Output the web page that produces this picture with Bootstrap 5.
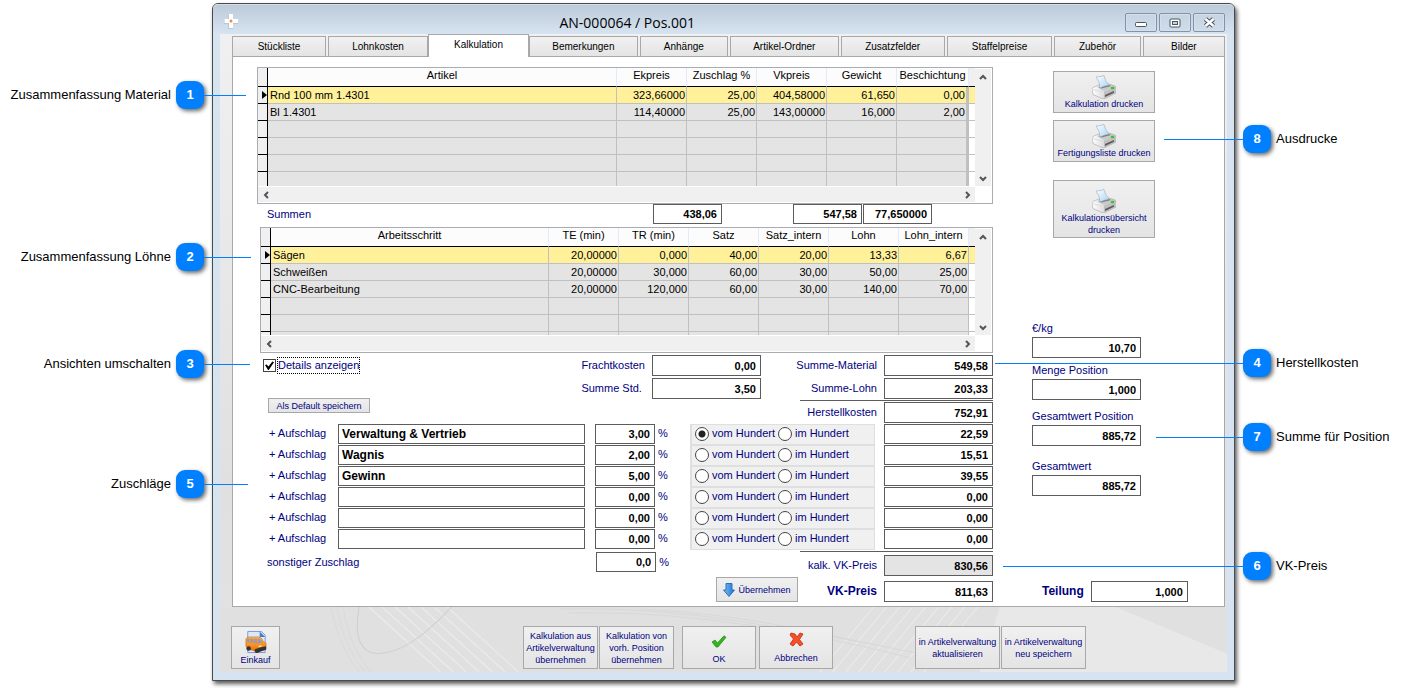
<!DOCTYPE html>
<html lang="de">
<head>
<meta charset="utf-8">
<meta name="viewport" content="width=device-width, initial-scale=1">
<title>AN-000064 / Pos.001</title>
<link href="https://cdn.jsdelivr.net/npm/bootstrap@5.3.0/dist/css/bootstrap.min.css" rel="stylesheet">
<style>
  :root { --navy: #000080; --edge: #a8a8a8; --field: #5c5c5c; --pin: #0080ff; }
  body { font-family: "Liberation Sans", Arial, sans-serif; font-size: 11px; line-height: 13px; color: #000; background: #fff; min-height: 100vh; }
  label, .lbl { color: var(--navy); white-space: nowrap; }

  /* numbered annotations beside the window */
  .side { flex: none; position: relative; z-index: 2; }
  .side-start { width: 212px; padding-right: 8px; }
  .side-end { width: 171px; padding-left: 8px; }
  .callout { display: flex; align-items: center; gap: 5px; font-size: 13px; line-height: 28px; white-space: nowrap; position: relative; }
  .side-start .callout { justify-content: flex-end; }
  .pin { width: 28px; height: 28px; border-radius: 9px; background: var(--pin); color: #fff; text-align: center; box-shadow: 2px 2px 4px rgba(0,0,0,.6); flex: none; }
  .leader { position: absolute; top: 14px; height: 1px; background: var(--pin); }
  .side-start .leader { left: 100%; }
  .side-end .leader { right: 100%; }

  /* window frame */
  .win { flex: 1 1 0; min-width: 1000px; margin-top: 3px; border: 1px solid #4a4a4a; border-radius: 6px 6px 0 0; background: #d6e4f2; padding: 0 7px 8px; box-shadow: 2px 3px 4px rgba(0,0,0,.65); }
  .titlebar { height: 30px; margin: 0 -7px; padding: 0 9px 0 10px; border-radius: 5px 5px 0 0; background: linear-gradient(#bccad9, #d6e4f2); font-family: "Open Sans", sans-serif; font-size: 14px; line-height: 36px; border-top: 1px solid #d5dee8; }
  .capbtn { width: 32px; height: 19px; padding: 0; border: 1px solid #8292a9; border-radius: 2px; background: linear-gradient(#c6d3e1, #cfdcea); display: flex; align-items: center; justify-content: center; box-shadow: inset 0 0 0 1px #d5e0ec; }
  .client { background: linear-gradient(#f0f0f0, #e0e0e0 70%, #e2e2e2); padding: 0 2px 0 12px; }

  /* tabs */
  .tabs { gap: 2px; height: 22px; align-items: flex-end; }
  .tabs button { border: 1px solid var(--edge); border-bottom: 0; background: linear-gradient(#f1f1f1, #e4e4e4); font-size: 10px; line-height: 12px; height: 20px; padding: 0; color: #000; min-width: 0; }
  .tabs button.active { background: #fff; height: 23px; margin: 0 -2px -1px; padding-bottom: 2px; position: relative; z-index: 1; }
  .sheet { background: #fff; border: 1px solid var(--edge); padding: 10px 0 4px 24px; }
  .maincol { flex: 1 1 0; min-width: 0; }
  .sidecol { flex: none; width: 231px; padding-left: 39px; }

  /* data grids */
  .gridbox { border: 1px solid #a9acb2; background: #fff; display: grid; grid-template-columns: 1fr 17px; grid-template-rows: auto 17px; }
  .clip-a { height: 118px; overflow: hidden; }
  .clip-b { height: 107px; overflow: hidden; }
  .gridbox table { width: 100%; table-layout: fixed; border-collapse: separate; border-spacing: 0; line-height: 16px; }
  .gridbox th { font-weight: 400; text-align: center; height: 19px; line-height: 14px; padding: 0 0 4px; border-bottom: 1px solid #000; border-right: 1px solid #e3ebf8; background: #fcfcfc; white-space: nowrap; }
  .gridbox td { height: 17px; padding: 0 1px 0 0; text-align: right; background: #e4e4e4; border-bottom: 1px solid silver; border-right: 1px solid silver; white-space: nowrap; }
  .gridbox th:first-child { background: #f0f0f0; border-right: 1px solid #000; }
  .gridbox td:first-child { background: #f0f0f0; border-right: 1px solid #000; border-bottom-color: #000; padding: 0; }
  .gridbox td:nth-child(2) { text-align: left; padding-left: 2px; }
  .gridbox th:last-child { background: #f0f0f0; border-right: 0; }
  .gridbox td:last-child { background: #fff; border-right: 0; padding: 0; }
  .gridbox .sel td:not(:first-child) { background: #fff09a; }
  .thick td:nth-last-child(2) { border-right-width: 3px; }
  .gridbox .sel td:first-child { text-align: right; }
  .sel svg { display: block; margin-left: auto; }
  .vbar, .hbar { background: #f0f0f0; display: flex; justify-content: space-between; align-items: center; }
  .vbar { flex-direction: column; padding: 5px 0 4px; margin: 1px 1px 0 0; }
  .hbar { padding: 0 4px 0 5px; margin: 1px 0; }
  .vbar svg, .hbar svg { fill: none; stroke: #555; stroke-width: 2; display: block; }

  /* fields */
  .fld { border: 1px solid var(--field); background: #fff; font-weight: 700; text-align: right; height: 21px; padding: 0 4px; width: 109px; color: #000; flex: none; border-radius: 0; }
  .fld-s { height: 20px; }
  .fld.sum { width: 69px; }
  .fld.pct { width: 60px; }
  .fld.text { text-align: left; font-size: 12px; flex: 1 1 0; min-width: 0; padding: 0 3px; }
  .fld.calc { background: #e4e4e4; }
  .total { width: 193px; }
  .total .line { height: 1px; background: var(--field); margin: 1px 0; }
  .pair { display: flex; align-items: center; justify-content: flex-end; gap: 7px; }
  .pair .fw-bold, .sidecol .fw-bold { font-size: 12px; }
  .surcharge { height: 21px; align-items: flex-start; }
  .surcharge > label, .surcharge > .lbl { line-height: 18px; }
  .surcharge > label:first-child { width: 81px; padding-left: 12px; }
  .percent { width: 35px; padding-left: 3px; }
  .mode { width: 185px; height: 21px; background: #f0f0f0; border: solid #dfdfdf; border-width: 1px 1px 1px 2px; display: flex; align-items: center; gap: 3px; padding: 0 0 2px 3px; margin-right: 9px; }
  .mode input { appearance: none; width: 14px; height: 14px; margin: 0; border: 1px solid #444; border-radius: 50%; background: #fff; }
  .mode input:checked { background: radial-gradient(circle, #222 0 3px, #fff 4px); }
  .tick { appearance: none; width: 13px; height: 13px; margin: 0; border: 1px solid #444; background: #fff; display: inline-grid; flex: none; }
  .tick:checked::before { content: ""; width: 9px; height: 9px; margin: 1px; background: #000; clip-path: polygon(0 45%, 18% 38%, 38% 60%, 82% 5%, 100% 14%, 42% 100%, 34% 100%); }
  .focus { border: 1px dotted #000; line-height: 15px; }

  /* push buttons */
  .push { border: 1px solid var(--edge); background: linear-gradient(#f0f0f0, #e4e4e4); color: var(--navy); font-size: 9px; line-height: 12px; padding: 0; white-space: nowrap; border-radius: 0; }
  .push svg { display: block; margin: 0 auto; }
  .print { width: 102px; height: 42px; }
  .print svg { margin-bottom: -1px; }
  .print.tall { height: 58px; padding-top: 7px; }
  .footer { height: 65px; padding: 19px 0 0 12px; margin: 0 -2px 0 -13px; position: relative; overflow: hidden; display: flex; align-items: flex-start; }
  .footer .art { position: absolute; inset: 0; width: 100%; height: 100%; }
  .footer .push { height: 43px; position: relative; flex: none; }
</style>
</head>
<body class="d-flex align-items-start">

<svg width="0" height="0" class="position-absolute" aria-hidden="true">
  <defs>
    <linearGradient id="paper" x1="0" y1="0" x2="1" y2="1"><stop offset="0" stop-color="#fff"/><stop offset="1" stop-color="#a8d4f8"/></linearGradient>
    <linearGradient id="shell" x1="0" y1="0" x2="1" y2="0"><stop offset="0" stop-color="#fff"/><stop offset="1" stop-color="#bbb"/></linearGradient>
    <linearGradient id="blue" x1="0" y1="0" x2="1" y2="0"><stop offset="0" stop-color="#7cc0f6"/><stop offset="1" stop-color="#1d6fd0"/></linearGradient>
    <linearGradient id="van" x1="0" y1="0" x2="0" y2="1"><stop offset="0" stop-color="#ffc04a"/><stop offset="1" stop-color="#ee6a0a"/></linearGradient>
    <symbol id="printer" viewBox="0 0 24 24">
      <path d="M0 14 Q0 13 2 12 L7 10 L17 9 L23 11 Q24 12 24 13 V18 L13 23.500 Q12 24 10 23.500 L1 19.500Z" fill="url(#shell)" stroke="#a5a5a5" stroke-width=".6"/>
      <path d="M5 12 L16 9 L23 11.500 L12 16Z" fill="#c9c9c9"/>
      <path d="M7 12 L17 10 L19 11 L9 13.500Z" fill="#777"/>
      <path d="M4 2 Q8 2 12 .5 Q13 6 17 10 Q12 11 8 13 Q8 7 4 2Z" fill="url(#paper)" stroke="#9ab" stroke-width=".6"/>
      <path d="M12 16.500 L24 12.500 V18 L12 23.800Z" fill="#c0c0c0"/>
      <path d="M13 20 L22 16 V17.800 L13 22Z" fill="#5a5a5a"/>
      <path d="M1 14.500 L11 17.500" stroke="#ddd"/>
      <ellipse cx="20.500" cy="13" rx="1.800" ry="1.200" fill="#2ecc20"/>
    </symbol>
  </defs>
</svg>

<aside class="side side-start">
  <div class="callout" style="margin-top:81px"><span>Zusammenfassung Material</span><b class="pin">1</b><i class="leader" style="width:42px"></i></div>
  <div class="callout" style="margin-top:134px"><span>Zusammenfassung Löhne</span><b class="pin">2</b><i class="leader" style="width:47px"></i></div>
  <div class="callout" style="margin-top:79px"><span>Ansichten umschalten</span><b class="pin">3</b><i class="leader" style="width:46px"></i></div>
  <div class="callout" style="margin-top:92px"><span>Zuschläge</span><b class="pin">5</b><i class="leader" style="width:44px"></i></div>
</aside>

<main class="win">
  <header class="titlebar d-flex">
    <svg width="16" height="17" viewBox="0 0 16 17" class="mt-2"><path d="M5 2h5v4h5v5h-5v5H5v-5H1V6h4z" fill="#b9bfc6" opacity=".8"/><path d="M6 1h4v5h5v4h-5v5H6v-5H1.500V6H6z" fill="#fff"/><circle cx="8" cy="8" r="1.500" fill="#f08a3c"/></svg>
    <span style="flex:319 0 0"></span>
    <span>AN-000064 / Pos.001</span>
    <span style="flex:428 0 0"></span>
    <span class="d-flex mt-2" style="gap:2px">
      <button type="button" class="capbtn" aria-label="Minimieren"><svg width="12" height="6" class="mt-1"><rect x=".5" y=".5" width="11" height="4" rx="1" fill="#fff" stroke="#4b5462"/></svg></button>
      <button type="button" class="capbtn" aria-label="Maximieren"><svg width="12" height="10"><rect x="1" y="1" width="10" height="8" rx="1" fill="#fff" stroke="#4b5462"/><rect x="3.500" y="3.500" width="5" height="3" fill="#c6d3e1" stroke="#4b5462"/></svg></button>
      <button type="button" class="capbtn" aria-label="Schließen"><svg width="13" height="11"><path d="M2.500 2 L10.500 9 M10.500 2 L2.500 9" stroke="#4b5462" stroke-width="4.500"/><path d="M2.500 2 L10.500 9 M10.500 2 L2.500 9" stroke="#fff" stroke-width="2.400"/></svg></button>
    </span>
  </header>

  <div class="client">
    <nav class="tabs d-flex" role="tablist">
      <button type="button" role="tab" style="flex:94 0 0">Stückliste</button>
      <button type="button" role="tab" style="flex:100 0 0">Lohnkosten</button>
      <button type="button" role="tab" class="active" aria-selected="true" style="flex:101 0 0">Kalkulation</button>
      <button type="button" role="tab" style="flex:109 0 0">Bemerkungen</button>
      <button type="button" role="tab" style="flex:88 0 0">Anhänge</button>
      <button type="button" role="tab" style="flex:109 0 0">Artikel-Ordner</button>
      <button type="button" role="tab" style="flex:104 0 0">Zusatzfelder</button>
      <button type="button" role="tab" style="flex:106 0 0">Staffelpreise</button>
      <button type="button" role="tab" style="flex:86 0 0">Zubehör</button>
      <button type="button" role="tab" style="flex:82 0 0">Bilder</button>
    </nav>

    <section class="sheet d-flex">
      <div class="maincol">
        <div class="gridbox">
          <div class="clip-a">
            <table class="thick">
              <colgroup><col style="width:10px"><col><col style="width:70px"><col style="width:70px"><col style="width:70px"><col style="width:70px"><col style="width:72px"><col style="width:6px"></colgroup>
              <thead><tr><th></th><th>Artikel</th><th>Ekpreis</th><th>Zuschlag %</th><th>Vkpreis</th><th>Gewicht</th><th>Beschichtung</th><th></th></tr></thead>
              <tbody>
                <tr class="sel"><td><svg width="5" height="8"><path d="M0 0L5 4L0 8z"/></svg></td><td>Rnd 100 mm 1.4301</td><td>323,66000</td><td>25,00</td><td>404,58000</td><td>61,650</td><td>0,00</td><td></td></tr>
                <tr><td></td><td>Bl 1.4301</td><td>114,40000</td><td>25,00</td><td>143,00000</td><td>16,000</td><td>2,00</td><td></td></tr>
                <tr><td></td><td></td><td></td><td></td><td></td><td></td><td></td><td></td></tr>
                <tr><td></td><td></td><td></td><td></td><td></td><td></td><td></td><td></td></tr>
                <tr><td></td><td></td><td></td><td></td><td></td><td></td><td></td><td></td></tr>
                <tr><td></td><td></td><td></td><td></td><td></td><td></td><td></td><td></td></tr>
              </tbody>
            </table>
          </div>
          <div class="vbar"><svg width="8" height="6"><path d="M1 5L4 2L7 5"/></svg><svg width="8" height="6"><path d="M1 1L4 4L7 1"/></svg></div>
          <div class="hbar"><svg width="6" height="8"><path d="M5 1L2 4L5 7"/></svg><svg width="6" height="8"><path d="M1 1L4 4L1 7"/></svg></div>
        </div>

        <div class="d-flex align-items-start" style="height:23px;padding-right:61px">
          <span class="lbl me-auto" style="padding:4px 0 0 10px">Summen</span>
          <input class="fld fld-s sum" aria-label="Summe Ekpreis" value="438,06">
          <input class="fld fld-s sum" aria-label="Summe Vkpreis" value="547,58" style="margin:0 1px 0 71px">
          <input class="fld fld-s sum" aria-label="Summe Gewicht" value="77,650000">
        </div>

        <div class="gridbox" style="margin-left:3px">
          <div class="clip-b">
            <table>
              <colgroup><col style="width:10px"><col><col style="width:70px"><col style="width:70px"><col style="width:70px"><col style="width:70px"><col style="width:70px"><col style="width:70px"><col style="width:6px"></colgroup>
              <thead><tr><th></th><th>Arbeitsschritt</th><th>TE (min)</th><th>TR (min)</th><th>Satz</th><th>Satz_intern</th><th>Lohn</th><th>Lohn_intern</th><th></th></tr></thead>
              <tbody>
                <tr class="sel"><td><svg width="5" height="8"><path d="M0 0L5 4L0 8z"/></svg></td><td>Sägen</td><td>20,00000</td><td>0,000</td><td>40,00</td><td>20,00</td><td>13,33</td><td>6,67</td><td></td></tr>
                <tr><td></td><td>Schweißen</td><td>20,00000</td><td>30,000</td><td>60,00</td><td>30,00</td><td>50,00</td><td>25,00</td><td></td></tr>
                <tr><td></td><td>CNC-Bearbeitung</td><td>20,00000</td><td>120,000</td><td>60,00</td><td>30,00</td><td>140,00</td><td>70,00</td><td></td></tr>
                <tr><td></td><td></td><td></td><td></td><td></td><td></td><td></td><td></td><td></td></tr>
                <tr><td></td><td></td><td></td><td></td><td></td><td></td><td></td><td></td><td></td></tr>
                <tr><td></td><td></td><td></td><td></td><td></td><td></td><td></td><td></td><td></td></tr>
              </tbody>
            </table>
          </div>
          <div class="vbar"><svg width="8" height="6"><path d="M1 5L4 2L7 5"/></svg><svg width="8" height="6"><path d="M1 1L4 4L7 1"/></svg></div>
          <div class="hbar"><svg width="6" height="8"><path d="M5 1L2 4L5 7"/></svg><svg width="6" height="8"><path d="M1 1L4 4L1 7"/></svg></div>
        </div>

        <div class="d-flex" style="padding-top:2px">
          <div class="me-auto" style="padding:2px 0 0 6px">
            <div class="d-flex align-items-center" style="gap:1px"><input type="checkbox" class="tick" id="details" checked><label class="focus" for="details">Details anzeigen</label></div>
            <button type="button" class="push" style="margin:24px 0 0 5px;width:102px;height:15px">Als Default speichern</button>
          </div>
          <div class="d-grid align-content-start" style="gap:2px;margin-right:39px">
            <div class="pair"><label for="fracht">Frachtkosten</label><input class="fld" id="fracht" value="0,00"></div>
            <div class="pair"><label for="std" class="me-auto">Summe Std.</label><input class="fld" id="std" value="3,50"></div>
          </div>
          <div class="total">
            <div class="pair"><label for="smat">Summe-Material</label><input class="fld" id="smat" value="549,58"></div>
            <div class="pair" style="margin-top:2px"><label for="slohn">Summe-Lohn</label><input class="fld" id="slohn" value="203,33"></div>
            <div class="line"></div>
            <div class="pair"><label for="hk">Herstellkosten</label><input class="fld" id="hk" value="752,91"></div>
          </div>
        </div>

        <div style="padding-top:1px">
          <div class="d-flex surcharge"><label for="n1">+ Aufschlag</label><input class="fld fld-s text" id="n1" value="Verwaltung &amp; Vertrieb"><input class="fld fld-s pct" style="margin-left:10px" aria-label="Aufschlag 1 Prozent" value="3,00"><span class="lbl percent">%</span><div class="mode"><input type="radio" name="m1" id="v1" checked><label for="v1">vom Hundert</label><input type="radio" name="m1" id="i1"><label for="i1">im Hundert</label></div><input class="fld fld-s" aria-label="Betrag 1" value="22,59"></div>
          <div class="d-flex surcharge"><label for="n2">+ Aufschlag</label><input class="fld fld-s text" id="n2" value="Wagnis"><input class="fld fld-s pct" style="margin-left:10px" aria-label="Aufschlag 2 Prozent" value="2,00"><span class="lbl percent">%</span><div class="mode"><input type="radio" name="m2" id="v2"><label for="v2">vom Hundert</label><input type="radio" name="m2" id="i2"><label for="i2">im Hundert</label></div><input class="fld fld-s" aria-label="Betrag 2" value="15,51"></div>
          <div class="d-flex surcharge"><label for="n3">+ Aufschlag</label><input class="fld fld-s text" id="n3" value="Gewinn"><input class="fld fld-s pct" style="margin-left:10px" aria-label="Aufschlag 3 Prozent" value="5,00"><span class="lbl percent">%</span><div class="mode"><input type="radio" name="m3" id="v3"><label for="v3">vom Hundert</label><input type="radio" name="m3" id="i3"><label for="i3">im Hundert</label></div><input class="fld fld-s" aria-label="Betrag 3" value="39,55"></div>
          <div class="d-flex surcharge"><label for="n4">+ Aufschlag</label><input class="fld fld-s text" id="n4"><input class="fld fld-s pct" style="margin-left:10px" aria-label="Aufschlag 4 Prozent" value="0,00"><span class="lbl percent">%</span><div class="mode"><input type="radio" name="m4" id="v4"><label for="v4">vom Hundert</label><input type="radio" name="m4" id="i4"><label for="i4">im Hundert</label></div><input class="fld fld-s" aria-label="Betrag 4" value="0,00"></div>
          <div class="d-flex surcharge"><label for="n5">+ Aufschlag</label><input class="fld fld-s text" id="n5"><input class="fld fld-s pct" style="margin-left:10px" aria-label="Aufschlag 5 Prozent" value="0,00"><span class="lbl percent">%</span><div class="mode"><input type="radio" name="m5" id="v5"><label for="v5">vom Hundert</label><input type="radio" name="m5" id="i5"><label for="i5">im Hundert</label></div><input class="fld fld-s" aria-label="Betrag 5" value="0,00"></div>
          <div class="d-flex surcharge"><label for="n6">+ Aufschlag</label><input class="fld fld-s text" id="n6"><input class="fld fld-s pct" style="margin-left:10px" aria-label="Aufschlag 6 Prozent" value="0,00"><span class="lbl percent">%</span><div class="mode"><input type="radio" name="m6" id="v6"><label for="v6">vom Hundert</label><input type="radio" name="m6" id="i6"><label for="i6">im Hundert</label></div><input class="fld fld-s" aria-label="Betrag 6" value="0,00"></div>
        </div>

        <div class="d-flex">
          <div class="d-flex flex-grow-1 align-items-start" style="padding:2px 0 0 10px">
            <label for="sonst" class="me-auto" style="line-height:20px">sonstiger Zuschlag</label>
            <input class="fld fld-s pct" id="sonst" value="0,0"><span class="lbl" style="line-height:20px;padding-left:3px">%</span>
          </div>
          <div class="d-flex align-items-end" style="margin:0 2px 0 47px"><button type="button" class="push d-flex align-items-center justify-content-center" style="width:82px;height:25px;gap:3px"><svg class="m-0" width="12" height="14" viewBox="0 0 12 14"><path d="M3 .5h6V7h2.500L6 13.500.500 7H3z" fill="url(#blue)" stroke="#2c6fc0"/></svg>Übernehmen</button></div>
          <div class="total">
            <div class="line"></div>
            <div class="pair" style="margin-top:3px"><label for="kvk">kalk. VK-Preis</label><input class="fld calc" id="kvk" value="830,56" readonly></div>
            <div class="pair" style="margin-top:5px"><label for="vk" class="fw-bold">VK-Preis</label><input class="fld" id="vk" value="811,63"></div>
          </div>
        </div>
      </div>

      <div class="sidecol d-flex flex-column">
        <div style="padding:4px 0 0 21px">
          <button type="button" class="push print d-block"><svg width="24" height="24"><use href="#printer"/></svg>Kalkulation drucken</button>
          <button type="button" class="push print d-block" style="margin-top:7px"><svg width="24" height="24"><use href="#printer"/></svg>Fertigungsliste drucken</button>
          <button type="button" class="push print tall d-block" style="margin-top:18px"><svg width="24" height="24"><use href="#printer"/></svg>Kalkulationsübersicht<br>drucken</button>
        </div>
        <label for="ekg" style="margin:84px 0 2px">€/kg</label>
        <input class="fld" id="ekg" value="10,70">
        <label for="menge" style="margin:6px 0 2px">Menge Position</label>
        <input class="fld" id="menge" value="1,000">
        <label for="gwp" style="margin:10px 0 2px">Gesamtwert Position</label>
        <input class="fld" id="gwp" value="885,72">
        <label for="gw" style="margin:14px 0 2px">Gesamtwert</label>
        <input class="fld" id="gw" value="885,72">
        <div class="mt-auto d-flex align-items-center" style="padding-left:10px;gap:7px"><label for="teilung" class="fw-bold">Teilung</label><input class="fld" style="width:97px" id="teilung" value="1,000"></div>
      </div>
    </section>

    <footer class="footer">
      <svg class="art" viewBox="0 0 1007 64" preserveAspectRatio="none" fill="none" aria-hidden="true">
        <rect width="1007" height="64" fill="#e0e0e0"/>
        <path d="M780 0 H896 L1007 46 V64 H760Z" fill="#e8e8e8"/>
        <g stroke="#ececec">
          <path d="M150 0l71 64M163 0l71 64M176 0l71 64M189 0l71 64M202 0l71 64M215 0l71 64M228 0l71 64"/>
          <path d="M600 64l54-64M613 64l54-64M626 64l54-64M639 64l54-64M652 64l54-64M665 64l54-64M678 64l54-64M691 64l54-64M704 64l54-64"/>
        </g>
        <path d="M112 0Q120 40 140 64M118 0Q124 40 146 64M124 0Q130 40 152 64" stroke="#dadada"/>
        <path d="M232 0Q190 46 158 46Q132 44 140 0" stroke="#cfcfcf"/>
        <g stroke="#d8d8d8"><path d="M340 2Q430 0 520 14T690 44M350 6Q440 4 530 18T690 50M420 2Q500 6 570 20T700 46"/></g>
      </svg>
      <button type="button" class="push" style="width:49px"><svg width="22" height="24" viewBox="0 0 24 25"><path d="M3 1h15l4 4v19H3z" fill="#dbe9fa" stroke="#7a8fd8"/><path d="M16 1l6 6h-6z" fill="#3f7fd0"/><path d="M1 9Q2 7 5 7h10q3 0 5 5l3 2v6l-9 3L3 20 1 17z" fill="url(#van)" stroke="#c8600c" stroke-width=".6"/><path d="M14 19l9-2v4l-9 3z" fill="#333"/><path d="M2 9h3v4l-3-.5zM6 9h3v4.500l-3-.5zM10 9h3v5l-3-.5zM14 9h2l3 4-5 1z" fill="#8f9ad0" stroke="#e8892a" stroke-width=".4"/><circle cx="4" cy="19.500" r="2.500" fill="#333"/><circle cx="13" cy="22" r="2.500" fill="#333"/><path d="M15 16.500l3-.5v1.500l-3 .7z" fill="#fff3b0"/></svg>Einkauf</button>
      <span style="flex:243 0 0"></span>
      <button type="button" class="push" style="width:75px">Kalkulation aus<br>Artikelverwaltung<br>übernehmen</button>
      <button type="button" class="push" style="width:75px;margin-left:1px">Kalkulation von<br>vorh. Position<br>übernehmen</button>
      <button type="button" class="push" style="width:74px;margin-left:8px"><svg width="16" height="13" viewBox="0 0 16 13" class="mt-1"><path d="M1 7l3-2 2.500 3L13 .8l2 1.500L7 12H5z" fill="#35b51e" stroke="#1d8a10" stroke-width=".7"/></svg><span class="d-block" style="margin-top:5px">OK</span></button>
      <button type="button" class="push" style="width:74px;margin-left:3px"><svg width="15" height="15" viewBox="0 0 15 15"><path d="M2 1l4 1 2 3 3-4 3 1-3.500 5.500L14 12l-3 2-3.500-4L4 14l-3-2 3.500-5L1 3z" fill="#f4502a" stroke="#c22a10" stroke-width=".8"/></svg><span class="d-block" style="margin-top:5px">Abbrechen</span></button>
      <span style="flex:82 0 0"></span>
      <button type="button" class="push" style="width:85px">in Artikelverwaltung<br>aktualisieren</button>
      <button type="button" class="push" style="width:85px;margin-left:1px">in Artikelverwaltung<br>neu speichern</button>
      <span style="flex:141 0 0"></span>
    </footer>
  </div>
</main>

<aside class="side side-end">
  <div class="callout" style="margin-top:125px"><i class="leader" style="width:79px"></i><b class="pin">8</b><span>Ausdrucke</span></div>
  <div class="callout" style="margin-top:196px"><i class="leader" style="width:248px"></i><b class="pin">4</b><span>Herstellkosten</span></div>
  <div class="callout" style="margin-top:46px"><i class="leader" style="width:87px"></i><b class="pin">7</b><span>Summe für Position</span></div>
  <div class="callout" style="margin-top:101px"><i class="leader" style="width:240px"></i><b class="pin">6</b><span>VK-Preis</span></div>
</aside>

<script src="https://cdn.jsdelivr.net/npm/bootstrap@5.3.0/dist/js/bootstrap.bundle.min.js"></script>
</body>
</html>
